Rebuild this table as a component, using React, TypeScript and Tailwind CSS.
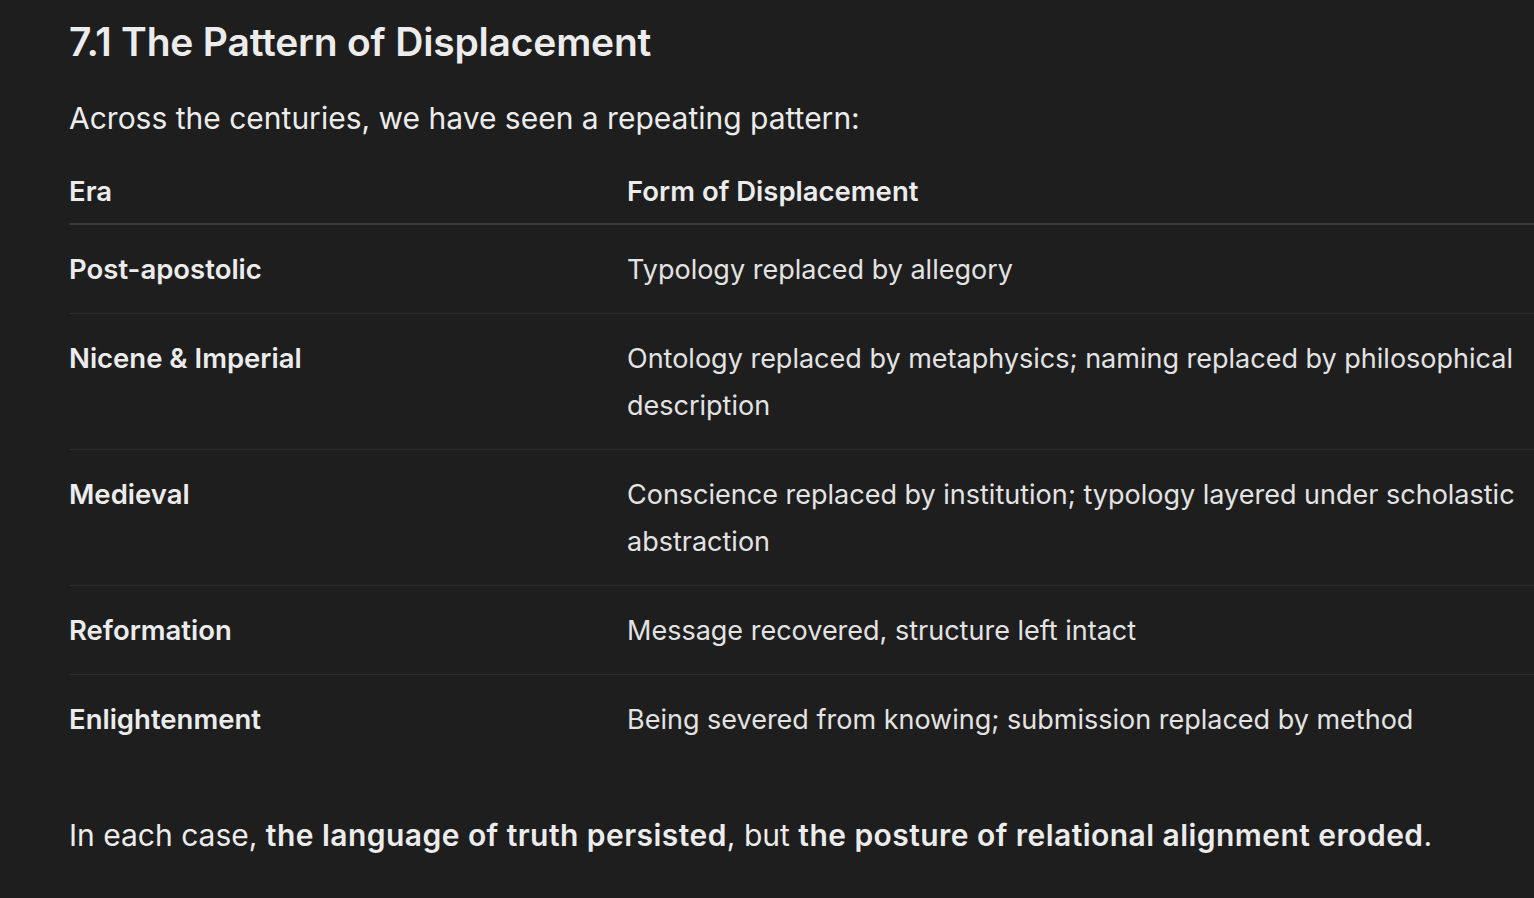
const rows = [
  { era: "Post-apostolic", form: "Typology replaced by allegory" },
  {
    era: "Nicene & Imperial",
    form: "Ontology replaced by metaphysics; naming replaced by philosophical description",
  },
  {
    era: "Medieval",
    form: "Conscience replaced by institution; typology layered under scholastic abstraction",
  },
  { era: "Reformation", form: "Message recovered, structure left intact" },
  { era: "Enlightenment", form: "Being severed from knowing; submission replaced by method" },
];

export default function App() {
  return (
    <div
      className="min-h-[898px] w-full overflow-hidden bg-[#1e1e1e] pl-[69px] text-[#ececec]"
      style={{ fontFamily: "Inter, 'Noto Sans', sans-serif" }}
    >
      {/* Heading */}
      <h3 className="pt-[18px] text-[39px] font-semibold leading-[48px] tracking-[-0.005em]">
        7.1 The Pattern of Displacement
      </h3>

      <p className="mt-[28px] text-[30px] leading-[48px]">
        Across the centuries, we have seen a repeating pattern:
      </p>

      {/* Table */}
      <table className="mt-[26px] w-[1465px] table-fixed border-collapse text-left text-[27px]">
        <thead>
          <tr className="border-b-2 border-[#3a3a3a]">
            <th className="w-[558px] pb-[8px] pt-0 text-[27.5px] font-semibold leading-[47px]">Era</th>
            <th className="pb-[8px] pt-0 text-[27.5px] font-semibold leading-[47px]">
              Form of Displacement
            </th>
          </tr>
        </thead>
        <tbody>
          {rows.map((row, i) => (
            <tr key={row.era} className={i < rows.length - 1 ? "border-b border-[#2c2c2c]" : ""}>
              <td className="pb-[20px] pt-[21px] align-top text-[27.5px] font-semibold leading-[47px]">
                {row.era}
              </td>
              <td className="pb-[20px] pr-[16px] pt-[21px] align-top leading-[47px] text-[#e3e3e3]">
                {row.form}
              </td>
            </tr>
          ))}
        </tbody>
      </table>

      <p className="mt-[48px] text-[30px] leading-[48px]">
        In each case,{" "}
        <strong className="font-semibold tracking-[0.015em]">the language of truth persisted</strong>, but{" "}
        <strong className="font-semibold tracking-[0.015em]">the posture of relational alignment eroded</strong>.
      </p>
    </div>
  );
}
